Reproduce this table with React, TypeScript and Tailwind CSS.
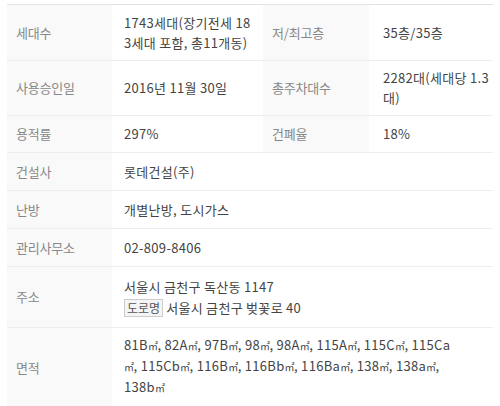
import React from "react";

const font = { fontFamily: '"Noto Sans CJK KR", "Noto Sans", sans-serif' };

function Label({ children, w }: { children: React.ReactNode; w: string }) {
  return (
    <div className={`${w} shrink-0 bg-[#f9f9f9] pl-[9px] flex items-center text-[#888888] tracking-[-0.2px]`}>
      {children}
    </div>
  );
}

function Area({ s }: { s: string }) {
  const parts = s.split("㎡");
  return (
    <span className="block whitespace-nowrap">
      {parts.map((p, i) => (
        <React.Fragment key={i}>
          {p}
          {i < parts.length - 1 && <span className="text-[10px] tracking-[-0.5px]">㎡</span>}
        </React.Fragment>
      ))}
    </span>
  );
}

export default function App() {
  const L = (s: string) => <span className="block whitespace-nowrap">{s}</span>;
  return (
    <div className="w-[500px] h-[406px] bg-white overflow-hidden pt-[4px] pl-[7px]" style={font}>
      <div className="w-[486px] border-t border-[#e3e3e3] text-[13px] leading-[20px]">
        {/* row 1 */}
        <div className="flex border-b border-[#eeeeee] h-[56px]">
          <Label w="w-[105px]">세대수</Label>
          <div className="w-[151px] shrink-0 pl-[12px] flex flex-col justify-center text-[#444444] tracking-[0.3px]">
            {L("1743세대(장기전세 18")}
            {L("3세대 포함, 총11개동)")}
          </div>
          <Label w="w-[106px]">저/최고층</Label>
          <div className="flex-1 pl-[14px] flex items-center text-[#444444] tracking-[0.3px]">35층/35층</div>
        </div>
        {/* row 2 */}
        <div className="flex border-b border-[#eeeeee] h-[55px]">
          <Label w="w-[105px]">사용승인일</Label>
          <div className="w-[151px] shrink-0 pl-[12px] flex items-center text-[#444444] tracking-[0.3px]">2016년 11월 30일</div>
          <Label w="w-[106px]">총주차대수</Label>
          <div className="flex-1 pl-[14px] flex flex-col justify-center text-[#444444] tracking-[0.3px]">
            {L("2282대(세대당 1.3")}
            {L("대)")}
          </div>
        </div>
        {/* row 3 */}
        <div className="flex border-b border-[#eeeeee] h-[37px]">
          <Label w="w-[105px]">용적률</Label>
          <div className="w-[151px] shrink-0 pl-[12px] flex items-center text-[#444444] tracking-[0.3px]">297%</div>
          <Label w="w-[106px]">건폐율</Label>
          <div className="flex-1 pl-[14px] flex items-center text-[#444444] tracking-[0.3px]">18%</div>
        </div>
        {[
          ["건설사", "롯데건설(주)"],
          ["난방", "개별난방, 도시가스"],
          ["관리사무소", "02-809-8406"],
        ].map(([k, v]) => (
          <div key={k} className="flex border-b border-[#eeeeee] h-[38px]">
            <Label w="w-[105px]">{k}</Label>
            <div className="flex-1 pl-[12px] flex items-center text-[#444444] tracking-[0.3px]">{v}</div>
          </div>
        ))}
        {/* address */}
        <div className="flex border-b border-[#eeeeee] h-[61px]">
          <Label w="w-[105px]">주소</Label>
          <div className="flex-1 pl-[12px] flex flex-col justify-center text-[#444444] tracking-[0.3px]">
            <span className="block whitespace-nowrap leading-[21px]">서울시 금천구 독산동 1147</span>
            <span className="flex items-center whitespace-nowrap leading-[21px] gap-[3px]">
              <span className="inline-block border border-[#cccccc] bg-[#f5f5f5] px-[2px] leading-[16px] text-[12px] text-[#555555] tracking-normal">도로명</span>
              서울시 금천구 벚꽃로 40
            </span>
          </div>
        </div>
        {/* area */}
        <div className="flex h-[90px]">
          <Label w="w-[105px]">
            <span className="-mt-[10px]">면적</span>
          </Label>
          <div className="flex-1 pl-[12px] pt-[7px] text-[#444444] tracking-[0.3px]">
            <Area s="81B㎡, 82A㎡, 97B㎡, 98㎡, 98A㎡, 115A㎡, 115C㎡, 115Ca" />
            <Area s="㎡, 115Cb㎡, 116B㎡, 116Bb㎡, 116Ba㎡, 138㎡, 138a㎡," />
            <Area s="138b㎡" />
          </div>
        </div>
      </div>
    </div>
  );
}
